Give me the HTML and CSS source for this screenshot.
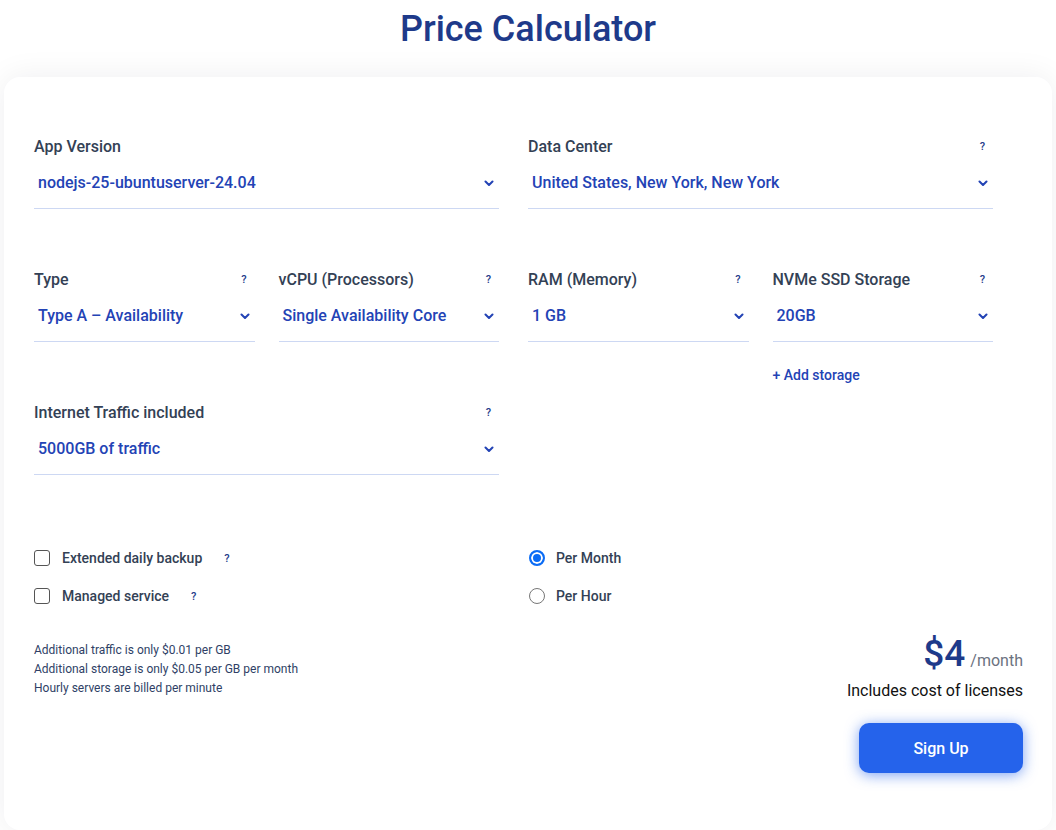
FILE: index.html
```html
<!DOCTYPE html>
<html lang="en">
<head>
    <meta charset="UTF-8">
    <meta name="viewport" content="width=device-width, initial-scale=1.0">
    <title>Price Calculator</title>
    <link rel="stylesheet" href="styles.css">
</head>
<body>
    <h1 class="page-title">Price Calculator</h1>

    <div class="calculator">
        <div class="fields">
            <div class="row">
                <div class="field">
                    <div class="field-label"><span>App Version</span></div>
                    <div class="select">
                        <span>nodejs-25-ubuntuserver-24.04</span>
                        <svg class="chevron" viewBox="0 0 10 6"><path d="M1.5 1.5l3.5 3.5 3.5-3.5"/></svg>
                    </div>
                </div>
                <div class="field">
                    <div class="field-label"><span>Data Center</span><span class="hint">?</span></div>
                    <div class="select">
                        <span>United States, New York, New York</span>
                        <svg class="chevron" viewBox="0 0 10 6"><path d="M1.5 1.5l3.5 3.5 3.5-3.5"/></svg>
                    </div>
                </div>
            </div>

            <div class="row row-specs">
                <div class="pair">
                    <div class="field">
                        <div class="field-label"><span>Type</span><span class="hint">?</span></div>
                        <div class="select">
                            <span>Type A – Availability</span>
                            <svg class="chevron" viewBox="0 0 10 6"><path d="M1.5 1.5l3.5 3.5 3.5-3.5"/></svg>
                        </div>
                    </div>
                    <div class="field">
                        <div class="field-label"><span>vCPU (Processors)</span><span class="hint">?</span></div>
                        <div class="select">
                            <span>Single Availability Core</span>
                            <svg class="chevron" viewBox="0 0 10 6"><path d="M1.5 1.5l3.5 3.5 3.5-3.5"/></svg>
                        </div>
                    </div>
                </div>
                <div class="pair">
                    <div class="field">
                        <div class="field-label"><span>RAM (Memory)</span><span class="hint">?</span></div>
                        <div class="select">
                            <span>1 GB</span>
                            <svg class="chevron" viewBox="0 0 10 6"><path d="M1.5 1.5l3.5 3.5 3.5-3.5"/></svg>
                        </div>
                    </div>
                    <div class="field">
                        <div class="field-label"><span>NVMe SSD Storage</span><span class="hint">?</span></div>
                        <div class="select">
                            <span>20GB</span>
                            <svg class="chevron" viewBox="0 0 10 6"><path d="M1.5 1.5l3.5 3.5 3.5-3.5"/></svg>
                        </div>
                        <a class="add-link" href="#">+ Add storage</a>
                    </div>
                </div>
            </div>

            <div class="row row-traffic">
                <div class="field">
                    <div class="field-label"><span>Internet Traffic included</span><span class="hint">?</span></div>
                    <div class="select">
                        <span>5000GB of traffic</span>
                        <svg class="chevron" viewBox="0 0 10 6"><path d="M1.5 1.5l3.5 3.5 3.5-3.5"/></svg>
                    </div>
                </div>
            </div>

            <div class="row options">
                <div class="option-list">
                    <label class="option">
                        <input type="checkbox" class="check">
                        <span>Extended daily backup</span>
                        <span class="hint">?</span>
                    </label>
                    <label class="option">
                        <input type="checkbox" class="check">
                        <span>Managed service</span>
                        <span class="hint">?</span>
                    </label>
                </div>
                <div class="option-list">
                    <label class="option">
                        <input type="radio" name="billing" class="radio" checked>
                        <span>Per Month</span>
                    </label>
                    <label class="option">
                        <input type="radio" name="billing" class="radio">
                        <span>Per Hour</span>
                    </label>
                </div>
            </div>
        </div>

        <div class="summary">
            <div class="notes">
                <p>Additional traffic is only $0.01 per GB</p>
                <p>Additional storage is only $0.05 per GB per month</p>
                <p>Hourly servers are billed per minute</p>
            </div>
            <div class="total">
                <div class="price"><span class="amount">$4</span><span class="period">/month</span></div>
                <p class="licenses">Includes cost of licenses</p>
                <button class="signup-btn">Sign Up</button>
            </div>
        </div>
    </div>
</body>
</html>
```

FILE: styles.css
```css
* {
    margin: 0;
    padding: 0;
    box-sizing: border-box;
}

body {
    font-family: 'Roboto', 'Liberation Sans', sans-serif;
    background: #fff;
    color: #334155;
}

.page-title {
    height: 77px;
    padding-top: 7px;
    text-align: center;
    font-size: 36px;
    line-height: 44px;
    font-weight: 500;
    color: #1e3a8a;
}

.calculator {
    margin: 0 4px;
    padding: 58px 29px 57px 30px;
    background: #fff;
    border-radius: 16px;
    box-shadow: 0 0 32px rgba(15, 23, 42, 0.07);
}

.fields {
    margin-right: 30px;
}

.row {
    display: grid;
    grid-template-columns: 1fr 1fr;
    column-gap: 29px;
}

.pair {
    display: grid;
    grid-template-columns: 1fr 1fr;
    column-gap: 24px;
}

.row-specs {
    margin-top: 59px;
}

.row-traffic {
    margin-top: 16px;
}

.field-label {
    display: flex;
    justify-content: space-between;
    align-items: center;
    padding-right: 8px;
    font-size: 16px;
    line-height: 24px;
    font-weight: 500;
    color: #334155;
    margin-bottom: 4px;
}

.hint {
    font-size: 11px;
    font-weight: 500;
    color: #1e3a8a;
}

.select {
    display: flex;
    justify-content: space-between;
    align-items: center;
    padding: 8px 5px 13px 4px;
    font-size: 16px;
    line-height: 24px;
    font-weight: 500;
    color: #2343b5;
    border-bottom: 1px solid #cdd8f3;
}

.chevron {
    width: 10px;
    height: 6px;
    fill: none;
    stroke: #2343b5;
    stroke-width: 2;
    stroke-linecap: round;
    stroke-linejoin: round;
}

.add-link {
    display: block;
    margin-top: 23px;
    font-size: 14px;
    line-height: 20px;
    font-weight: 500;
    color: #2343b5;
    text-decoration: none;
}

.options {
    margin-top: 71px;
}

.option-list {
    display: flex;
    flex-direction: column;
    gap: 14px;
}

.option {
    display: flex;
    align-items: center;
    height: 24px;
    font-size: 14px;
    font-weight: 500;
    color: #334155;
}

.option .hint {
    margin-left: 22px;
}

.check,
.radio {
    appearance: none;
    width: 16px;
    height: 16px;
    border: 1px solid #555;
    background: #fff;
}

.check {
    border-radius: 3px;
    margin-right: 12px;
}

.radio {
    border-radius: 50%;
    border-color: #777;
    margin-left: 1px;
    margin-right: 11px;
}

.radio:checked {
    border: 2px solid #0b6cf5;
    background: #0b6cf5;
    box-shadow: inset 0 0 0 2px #fff;
}

.summary {
    display: flex;
    justify-content: space-between;
    align-items: flex-start;
    margin-top: 33px;
}

.notes p {
    font-size: 12px;
    line-height: 19px;
    color: #2f3f66;
}

.total {
    display: flex;
    flex-direction: column;
    align-items: flex-end;
}

.price {
    display: flex;
    align-items: baseline;
    gap: 5px;
    margin-top: -8px;
}

.amount {
    font-size: 37px;
    line-height: 42px;
    font-weight: 500;
    color: #1e3a8a;
}

.period {
    font-size: 16px;
    color: #6b7280;
}

.licenses {
    margin-top: 4px;
    font-size: 16px;
    line-height: 24px;
    color: #111;
}

.signup-btn {
    margin-top: 20px;
    width: 164px;
    height: 50px;
    border: none;
    border-radius: 10px;
    background: #2563eb;
    color: #fff;
    font-family: inherit;
    font-size: 16px;
    font-weight: 500;
    box-shadow: 0 2px 14px rgba(37, 99, 235, 0.6);
    cursor: pointer;
}
```
